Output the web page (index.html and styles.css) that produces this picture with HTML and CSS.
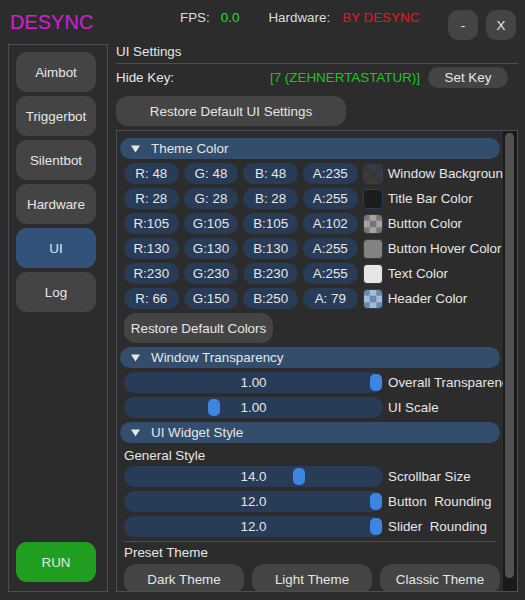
FILE: index.html
```html
<!DOCTYPE html>
<html>
<head>
<meta charset="utf-8">
<link rel="stylesheet" href="styles.css">
</head>
<body>
<div class="app">
  <header class="topbar">
    <div class="brand">DESYNC</div>
    <div class="stats">
      <span class="lbl">FPS:</span><span class="fps">0.0</span>
      <span class="lbl hw">Hardware:</span><span class="hwv">BY DESYNC</span>
    </div>
    <div class="winbtns">
      <button class="wbtn">-</button>
      <button class="wbtn">X</button>
    </div>
  </header>

  <div class="main">
    <nav class="sidebar">
      <button class="nav">Aimbot</button>
      <button class="nav">Triggerbot</button>
      <button class="nav">Silentbot</button>
      <button class="nav">Hardware</button>
      <button class="nav active">UI</button>
      <button class="nav">Log</button>
      <button class="run">RUN</button>
    </nav>

    <section class="panel">
      <div class="ptitle">UI Settings</div>
      <div class="sep"></div>
      <div class="hidekey">
        <span>Hide Key:</span>
        <div class="keygrp">
          <span class="keyval">[7 (ZEHNERTASTATUR)]</span>
          <button class="btn setkey">Set Key</button>
        </div>
      </div>
      <button class="btn restore-ui">Restore Default UI Settings</button>

      <div class="child">
        <div class="content">
          <div class="hdr"><svg class="arrow" width="9" height="8" viewBox="0 0 9 8"><polygon points="0,0.5 9,0.5 4.5,7.5"/></svg><span>Theme Color</span></div>

          <div class="crow">
            <span class="pill">R: 48</span><span class="pill">G: 48</span><span class="pill">B: 48</span><span class="pill">A:235</span>
            <span class="sw sw-winbg"></span><span class="clabel">Window Background</span>
          </div>
          <div class="crow">
            <span class="pill">R: 28</span><span class="pill">G: 28</span><span class="pill">B: 28</span><span class="pill">A:255</span>
            <span class="sw sw-title"></span><span class="clabel">Title Bar Color</span>
          </div>
          <div class="crow">
            <span class="pill">R:105</span><span class="pill">G:105</span><span class="pill">B:105</span><span class="pill">A:102</span>
            <span class="sw sw-button"></span><span class="clabel">Button Color</span>
          </div>
          <div class="crow">
            <span class="pill">R:130</span><span class="pill">G:130</span><span class="pill">B:130</span><span class="pill">A:255</span>
            <span class="sw sw-hover"></span><span class="clabel">Button Hover Color</span>
          </div>
          <div class="crow">
            <span class="pill">R:230</span><span class="pill">G:230</span><span class="pill">B:230</span><span class="pill">A:255</span>
            <span class="sw sw-text"></span><span class="clabel">Text Color</span>
          </div>
          <div class="crow">
            <span class="pill">R: 66</span><span class="pill">G:150</span><span class="pill">B:250</span><span class="pill">A: 79</span>
            <span class="sw sw-header"></span><span class="clabel">Header Color</span>
          </div>

          <button class="btn restore-colors">Restore Default Colors</button>

          <div class="hdr"><svg class="arrow" width="9" height="8" viewBox="0 0 9 8"><polygon points="0,0.5 9,0.5 4.5,7.5"/></svg><span>Window Transparency</span></div>

          <div class="srow">
            <div class="slider"><span class="sval">1.00</span><span class="grab" style="left:246px"></span></div>
            <span class="clabel">Overall Transparency</span>
          </div>
          <div class="srow">
            <div class="slider"><span class="sval">1.00</span><span class="grab" style="left:84px"></span></div>
            <span class="clabel">UI Scale</span>
          </div>

          <div class="hdr"><svg class="arrow" width="9" height="8" viewBox="0 0 9 8"><polygon points="0,0.5 9,0.5 4.5,7.5"/></svg><span>UI Widget Style</span></div>

          <div class="subtitle gs">General Style</div>

          <div class="srow">
            <div class="slider"><span class="sval">14.0</span><span class="grab" style="left:169px"></span></div>
            <span class="clabel">Scrollbar Size</span>
          </div>
          <div class="srow">
            <div class="slider"><span class="sval">12.0</span><span class="grab" style="left:246px"></span></div>
            <span class="clabel">Button  Rounding</span>
          </div>
          <div class="srow">
            <div class="slider"><span class="sval">12.0</span><span class="grab" style="left:246px"></span></div>
            <span class="clabel">Slider  Rounding</span>
          </div>

          <div class="isep"></div>

          <div class="subtitle">Preset Theme</div>

          <div class="themes">
            <button class="btn theme">Dark Theme</button>
            <button class="btn theme">Light Theme</button>
            <button class="btn theme">Classic Theme</button>
          </div>
        </div>
        <div class="scroll"><div class="thumb"></div></div>
      </div>
    </section>
  </div>
</div>
</body>
</html>
```

FILE: styles.css
```css
* { box-sizing: border-box; }

html, body {
  margin: 0;
  padding: 0;
  background: #2c2c2c;
}

body {
  font-family: "Liberation Sans", Arial, sans-serif;
  font-size: 13.4px;
  color: #e6e6e6;
  width: 525px;
  height: 600px;
  overflow: hidden;
}

button {
  font-family: inherit;
  font-size: inherit;
  color: #e6e6e6;
  border: none;
  margin: 0;
  padding: 0;
  cursor: pointer;
}

.app {
  display: flex;
  flex-direction: column;
}

/* top bar */
.topbar {
  display: flex;
  align-items: flex-start;
  height: 44px;
  padding: 10px 9px 0 10px;
}

.brand {
  width: 170px;
  margin-top: 1px;
  font-size: 20px;
  line-height: 23px;
  color: #d41ed4;
}

.stats {
  display: flex;
  line-height: 16px;
  white-space: nowrap;
}

.lbl { color: #dcdcdc; }
.fps { margin-left: 11px; color: #19e619; }
.hw { margin-left: 29px; }
.hwv { margin-left: 12px; color: #ee1414; }

.winbtns {
  margin-left: auto;
  display: flex;
  gap: 8px;
}

.wbtn {
  width: 30px;
  height: 30px;
  border-radius: 10px;
  background: #444444;
}

/* main */
.main {
  display: flex;
  gap: 8px;
  padding-left: 8px;
  height: 548px;
}

.sidebar {
  width: 100px;
  height: 548px;
  border: 1px solid #4d4d56;
  padding: 7px 0 9px 7px;
  display: flex;
  flex-direction: column;
  gap: 4px;
}

.nav, .run {
  width: 80px;
  height: 40px;
  border-radius: 11px;
  background: #444444;
  flex-shrink: 0;
}

.nav.active { background: #33527a; }

.run {
  margin-top: auto;
  background: #1f9e1f;
}

/* panel */
.panel {
  width: 402px;
  display: flex;
  flex-direction: column;
}

.ptitle {
  height: 16px;
  line-height: 16px;
}

.sep {
  margin-top: 3px;
  height: 1px;
  background: #4d4d56;
}

.hidekey {
  margin-top: 3px;
  height: 21px;
  display: flex;
  align-items: center;
  justify-content: space-between;
  padding-right: 10px;
}

.keygrp {
  display: flex;
  align-items: center;
  gap: 8px;
}

.keyval { color: #1fc41f; }

.btn {
  background: #444444;
  border-radius: 12px;
  white-space: nowrap;
}

.setkey {
  width: 80px;
  height: 21px;
  border-radius: 10.5px;
}

.restore-ui {
  margin-top: 8px;
  width: 230px;
  height: 30px;
}

.child {
  margin-top: 4px;
  flex: 1;
  min-height: 0;
  border: 1px solid #4d4d56;
  display: flex;
  overflow: hidden;
}

.content {
  flex: 1;
  min-width: 0;
  overflow: hidden;
  padding: 7px 3px 0 3px;
  display: flex;
  flex-direction: column;
  gap: 4px;
}

.hdr {
  flex-shrink: 0;
  height: 21px;
  border-radius: 10.5px;
  background: #334d6c;
  display: flex;
  align-items: center;
  padding-left: 11px;
  gap: 11px;
  white-space: nowrap;
}

.arrow { fill: #e6e6e6; display: block; }

.crow, .srow {
  flex-shrink: 0;
  margin-left: 4px;
  display: flex;
  align-items: center;
  gap: 5px;
  white-space: nowrap;
  height: 21px;
}

.pill {
  flex-shrink: 0;
  width: 54.67px;
  height: 21px;
  line-height: 21px;
  border-radius: 10.5px;
  background: #283b57;
  text-align: center;
  white-space: pre;
}

.clabel {
  flex-shrink: 0;
  white-space: pre;
}

.sw {
  flex-shrink: 0;
  width: 20px;
  height: 20px;
  border-radius: 4px;
  border: 1px solid #2b3f5c;
  background-origin: border-box;
  background-size: 13.34px 13.34px;
}

.sw-winbg { background-image: conic-gradient(#3c3c3c 0 25%, #363636 0 50%, #3c3c3c 0 75%, #363636 0); }
.sw-title { background: #1c1c1c; }
.sw-button { background-image: conic-gradient(#a4a4a4 0 25%, #777777 0 50%, #a4a4a4 0 75%, #777777 0); border-color: #3a3a3a; }
.sw-hover { background: #828282; border-color: #3a3a3a; }
.sw-text { background: #e6e6e6; border-color: #3a3a3a; }
.sw-header { background-image: conic-gradient(#a1bbda 0 25%, #6d87a6 0 50%, #a1bbda 0 75%, #6d87a6 0); }

.restore-colors {
  flex-shrink: 0;
  margin-left: 4px;
  align-self: flex-start;
  width: 149px;
  height: 30px;
}

.slider {
  position: relative;
  flex-shrink: 0;
  width: 259px;
  height: 21px;
  border-radius: 10.5px;
  background: #283b57;
  text-align: center;
  line-height: 21px;
}

.grab {
  position: absolute;
  top: 2px;
  width: 12px;
  height: 17px;
  border-radius: 5px;
  background: #3d85e0;
}

.subtitle {
  flex-shrink: 0;
  margin-left: 4px;
  line-height: 14px;
  height: 14px;
  white-space: nowrap;
}

.subtitle.gs {
  margin-top: 2px;
  line-height: 13px;
  height: 13px;
}

.isep {
  flex-shrink: 0;
  margin-left: 4px;
  width: 371px;
  height: 1px;
  background: #4d4d56;
}

.themes {
  flex-shrink: 0;
  margin-left: 4px;
  display: flex;
  gap: 8px;
}

.theme {
  flex-shrink: 0;
  width: 120px;
  height: 30px;
}

.scroll {
  flex-shrink: 0;
  width: 14px;
  background: #1a1a1a;
  padding: 2px 3px 0 2px;
}

.thumb {
  width: 9px;
  height: 445px;
  border-radius: 5px;
  background: #525252;
}
```
